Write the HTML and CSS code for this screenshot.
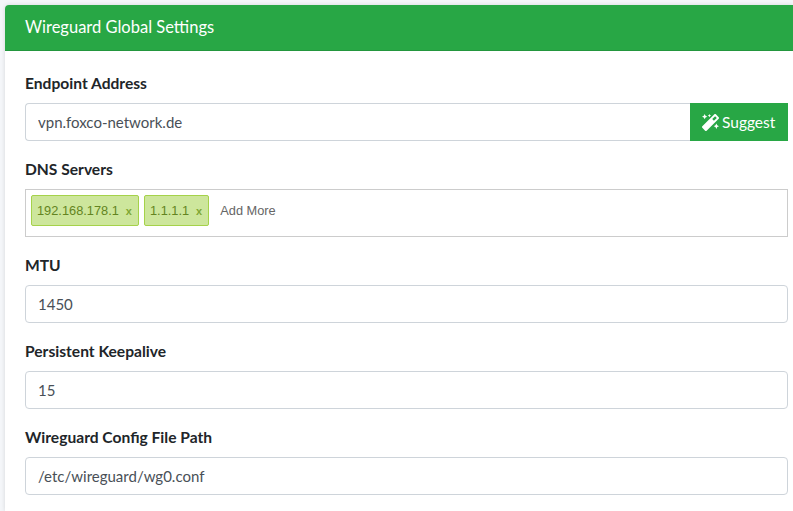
FILE: index.html
```html
<html>
<head>
    <title>Wireguard Global Settings</title>
    <link rel="stylesheet" href="styles.css">
</head>
<body>
    <div class="card">
        <div class="card-header">Wireguard Global Settings</div>
        <div class="card-body">
            <div class="form-group">
                <label>Endpoint Address</label>
                <div class="input-group">
                    <input type="text" class="form-control joined" value="vpn.foxco-network.de">
                    <button class="btn-suggest">
                        <svg class="icon" viewBox="0 0 512 512"><path fill="currentColor" d="M224 96l16-32 32-16-32-16-16-32-16 32-32 16 32 16 16 32zM80 160l26.66-53.33L160 80l-53.34-26.67L80 0 53.34 53.33 0 80l53.34 26.67L80 160zm352 128l-26.66 53.33L352 368l53.34 26.67L432 448l26.66-53.33L512 368l-53.34-26.67L432 288zm70.62-193.77L417.77 9.38C411.53 3.12 403.34 0 395.15 0c-8.19 0-16.38 3.12-22.63 9.38L9.38 372.52c-12.5 12.5-12.5 32.76 0 45.25l84.85 84.85c6.25 6.25 14.44 9.38 22.62 9.38 8.19 0 16.38-3.12 22.63-9.38l363.14-363.15c12.5-12.49 12.5-32.75 0-45.24zM359.45 203.46l-50.91-50.91 86.6-86.6 50.91 50.91-86.6 86.6z"/></svg>
                        Suggest
                    </button>
                </div>
            </div>
            <div class="form-group">
                <label>DNS Servers</label>
                <div class="tags-input">
                    <span class="tag">192.168.178.1<a class="tag-x">x</a></span>
                    <span class="tag">1.1.1.1<a class="tag-x">x</a></span>
                    <span class="add-more">Add More</span>
                </div>
            </div>
            <div class="form-group">
                <label>MTU</label>
                <input type="text" class="form-control" value="1450">
            </div>
            <div class="form-group">
                <label>Persistent Keepalive</label>
                <input type="text" class="form-control" value="15">
            </div>
            <div class="form-group">
                <label>Wireguard Config File Path</label>
                <input type="text" class="form-control" value="/etc/wireguard/wg0.conf">
            </div>
        </div>
    </div>
</body>
</html>
```

FILE: styles.css
```css
html, body {
    height: 100%;
}
body {
    margin: 0;
    padding: 5px 0 0 5px;
    box-sizing: border-box;
    overflow: hidden;
    background: #f4f6f9;
    font-family: "Lato", "Liberation Sans", sans-serif;
    font-size: 16px;
    line-height: 1.5;
    color: #212529;
}
.card {
    background: #fff;
    border-radius: 4px 0 0 0;
    box-shadow: 0 0 4px rgba(0,0,0,0.13);
    height: 506px;
}
.card-header {
    height: 46px;
    box-sizing: border-box;
    padding: 0 20px;
    background: #28a745;
    border-bottom: 1px solid #23963e;
    border-radius: 4px 0 0 0;
    color: #fff;
    font-size: 16.5px;
    line-height: 45px;
}
.card-body {
    padding: 20px 5px 0 20px;
}
.form-group {
    margin-bottom: 16px;
}
label {
    display: block;
    margin-bottom: 8px;
    font-size: 15.6px;
    font-weight: 700;
    line-height: 24px;
}
.form-control {
    display: block;
    width: 100%;
    height: 38px;
    box-sizing: border-box;
    padding: 6px 12px;
    border: 1px solid #ced4da;
    border-radius: 4px;
    font-family: inherit;
    font-size: 15px;
    color: #495057;
    background: #fff;
}
.input-group {
    display: flex;
}
.joined {
    flex: 1;
    border-right: 0;
    border-radius: 4px 0 0 4px;
}
.btn-suggest {
    display: flex;
    align-items: center;
    gap: 3px;
    width: 98px;
    height: 38px;
    padding: 0 0 0 12px;
    border: 0;
    background: #28a745;
    color: #fff;
    font-family: inherit;
    font-size: 15.5px;
}
.icon {
    width: 17px;
    height: 17px;
}
.tags-input {
    display: flex;
    align-items: flex-start;
    height: 48px;
    box-sizing: border-box;
    padding: 5px;
    border: 1px solid #ccc;
    font-family: "Liberation Sans", sans-serif;
    font-size: 12.8px;
}
.tag {
    display: inline-block;
    height: 31px;
    box-sizing: border-box;
    margin-right: 5px;
    padding: 0 5px;
    border: 1px solid #a5d24a;
    border-radius: 2px;
    background: #cde69c;
    color: #638421;
    line-height: 29px;
    white-space: nowrap;
}
.tag-x {
    margin-left: 7px;
    margin-right: 1px;
    font-size: 11px;
    font-weight: 700;
    color: #7fa632;
}
.add-more {
    margin-left: 6px;
    color: #666;
    line-height: 31px;
}
```
